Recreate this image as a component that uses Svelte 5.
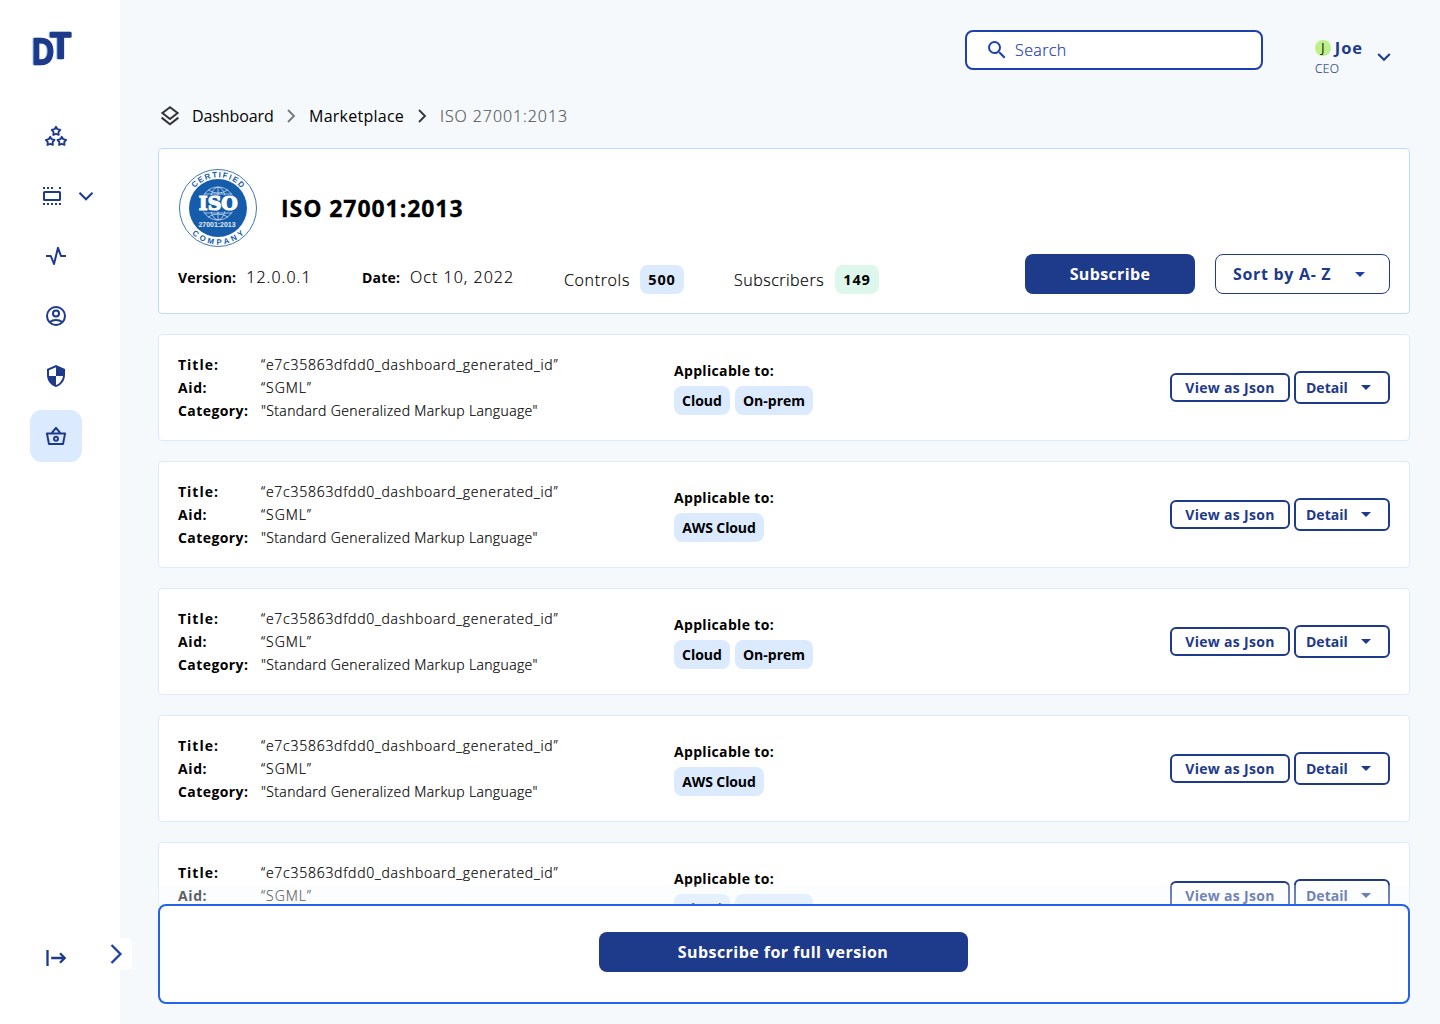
<script>
  const controls = [
    ['Cloud', 'On-prem'],
    ['AWS Cloud'],
    ['Cloud', 'On-prem'],
    ['AWS Cloud'],
    ['Cloud', 'On-prem']
  ];
  const star = 'M0-4.3 1.4-1.9 4.3-1.2 2.4 1 2.7 3.8 0 2.8-2.7 3.8-2.4 1-4.3-1.2-1.4-1.9Z';
</script>

{#snippet caret()}
  <svg class="caret" width="10" height="5" viewBox="0 0 10 5"><path d="M0 0h10L5 5z" fill="currentColor" /></svg>
{/snippet}

{#snippet chevron()}
  <svg width="24" height="24" viewBox="0 0 24 24" fill="none" stroke="currentColor" stroke-width="1.8"><path d="M9 6l6 6-6 6" /></svg>
{/snippet}

<div class="app">
  <aside class="sidebar">
    <svg class="logo" width="44" height="40" viewBox="0 0 44 40">
      <text class="d" x="1.7" y="34.4" textLength="22.5" lengthAdjust="spacingAndGlyphs">D</text>
      <text x="20.4" y="28.4" textLength="20.4" lengthAdjust="spacingAndGlyphs">T</text>
    </svg>
    <nav>
      <a class="item" href="#favorites" aria-label="Favorites">
        <svg width="24" height="24" viewBox="0 0 24 24" fill="none" stroke="currentColor" stroke-width="1.9" stroke-linejoin="round">
          <path transform="translate(12 7.1)" d={star} />
          <path transform="translate(6.2 17.1)" d={star} />
          <path transform="translate(17.8 17.1)" d={star} />
        </svg>
      </a>
      <a class="item wide" href="#views" aria-label="Views">
        <svg width="24" height="24" viewBox="0 0 24 24" fill="none" stroke="currentColor" stroke-width="2">
          <rect x="4" y="8" width="16" height="8" rx=".6" />
          <path d="M3 4h10M19 4h2M3 20h18" stroke-dasharray="2 2" />
        </svg>
        <svg class="more" width="24" height="24" viewBox="0 0 24 24" fill="none" stroke="currentColor" stroke-width="2"><path d="M5.5 8.8 12 15.3l6.5-6.5" /></svg>
      </a>
      <a class="item" href="#activity" aria-label="Activity">
        <svg width="24" height="24" viewBox="0 0 24 24" fill="none" stroke="currentColor" stroke-width="2" stroke-linejoin="round"><path d="M2 12h4.8l3.2 8 4-16.2L17 12h5" /></svg>
      </a>
      <a class="item" href="#account" aria-label="Account">
        <svg width="24" height="24" viewBox="0 0 24 24" fill="none" stroke="currentColor" stroke-width="2"><circle cx="12" cy="12" r="9" /><circle cx="12" cy="9.6" r="3" /><path d="M5.7 18.2C9 15.3 15 15.3 18.3 18.2" /></svg>
      </a>
      <a class="item" href="#security" aria-label="Security">
        <svg width="24" height="24" viewBox="0 0 24 24" fill="currentColor"><path d="M12 1 3 5v6c0 5.55 3.84 10.74 9 12 5.16-1.26 9-6.45 9-12V5l-9-4zm0 11h7c-.53 4.12-3.28 7.79-7 8.94V12H5V6.3l7-3.11V12z" /></svg>
      </a>
      <a class="item active" href="#marketplace" aria-label="Marketplace">
        <svg width="24" height="24" viewBox="0 0 24 24" fill="none" stroke="currentColor" stroke-width="2" stroke-linejoin="round"><path d="M2.9 9.4h18.2L19 20H5L2.9 9.4zM7.8 9 12 3.9 16.2 9" /><circle cx="12" cy="14.8" r="2" /></svg>
      </a>
    </nav>
    <svg class="exit" width="24" height="24" viewBox="0 0 24 24" fill="none" stroke="currentColor" stroke-width="2.3"><path d="M3.5 4v16M7.2 12H21M16 7.3l4.7 4.7-4.7 4.7" /></svg>
    <button class="expand" aria-label="Expand">
      <svg width="16" height="24" viewBox="0 0 16 24" fill="none" stroke="currentColor" stroke-width="2.4"><path d="M3.5 3 12.4 12l-8.9 9" /></svg>
    </button>
  </aside>

  <main>
    <header class="topbar">
      <label class="search">
        <svg width="24" height="24" viewBox="0 0 24 24" fill="currentColor"><path d="M15.5 14h-.79l-.28-.27A6.47 6.47 0 0 0 16 9.5 6.5 6.5 0 1 0 9.5 16c1.61 0 3.09-.59 4.23-1.57l.27.28v.79l5 4.99L20.49 19l-4.99-5zm-6 0C7.01 14 5 11.99 5 9.5S7.01 5 9.5 5 14 7.01 14 9.5 11.99 14 9.5 14z" /></svg>
        <span>Search</span>
      </label>
      <div class="user">
        <div class="who">
          <div class="name"><i>J</i><b>Joe</b></div>
          <div class="role">CEO</div>
        </div>
        <svg width="14" height="10" viewBox="0 0 14 10" fill="none" stroke="currentColor" stroke-width="2"><path d="M1.2 2 7 7.8 12.8 2" /></svg>
      </div>
    </header>

    <div class="crumbs">
      <svg width="24" height="24" viewBox="0 0 24 24" fill="none" stroke="#333" stroke-width="2"><path d="M12 3.2 19.6 9 12 15 4.4 9zM3.6 13.6 12 20.2l8.4-6.6" /></svg>
      <span class="c1">Dashboard</span>
      <span class="sep light">{@render chevron()}</span>
      <span class="c2">Marketplace</span>
      <span class="sep">{@render chevron()}</span>
      <span class="c3">ISO 27001:2013</span>
    </div>

    <section class="card summary">
      <div class="identity">
        <svg class="badge" width="80" height="80" viewBox="-40 -40 80 80">
          <defs>
            <path id="arc-top" d="M-30.6 0A30.6 30.6 0 0 1 30.6 0" />
            <path id="arc-bottom" d="M-36.6 0A36.6 36.6 0 0 0 36.6 0" />
          </defs>
          <circle r="38.5" fill="#fff" stroke="#3f78b8" stroke-width="1" />
          <circle r="29" fill="#155cab" />
          <g fill="none" stroke="#c9dcf0" stroke-width=".8">
            <circle r="16.5" cy="-4.5" />
            <ellipse rx="8" ry="16.5" cy="-4.5" />
            <path d="M0-21V12M-13.5-14h27M-13.5 5h27M-10-18Q0-12 10-18M-10 9Q0 3 10 9" />
          </g>
          <path d="M-22-12.6h44V3.6h-44z" fill="#155cab" />
          <text class="iso" x="-19.2" y="2.2" textLength="39" lengthAdjust="spacingAndGlyphs">ISO</text>
          <text class="num" x="-19.5" y="18.8" textLength="37" lengthAdjust="spacingAndGlyphs">27001:2013</text>
          <text class="ring"><textPath href="#arc-top" startOffset="50%" textLength="53">CERTIFIED</textPath></text>
          <text class="ring"><textPath href="#arc-bottom" startOffset="50%" textLength="58">COMPANY</textPath></text>
        </svg>
        <h1>ISO 27001:2013</h1>
      </div>
      <div class="facts">
        <div class="fact version"><b>Version:</b><span>12.0.0.1</span></div>
        <div class="fact date"><b>Date:</b><span>Oct 10, 2022</span></div>
        <div class="fact count controls"><span>Controls</span><em class="pill">500</em></div>
        <div class="fact count subscribers"><span>Subscribers</span><em class="pill green">149</em></div>
        <button class="primary subscribe">Subscribe</button>
        <button class="sort"><span>Sort by A- Z</span>{@render caret()}</button>
      </div>
    </section>

    {#each controls as tags}
      <section class="card control">
        <dl>
          <dt class="k1">Title:</dt><dd class="v1">“e7c35863dfdd0_dashboard_generated_id”</dd>
          <dt class="k2">Aid:</dt><dd class="v2">“SGML”</dd>
          <dt class="k3">Category:</dt><dd class="v3">"Standard Generalized Markup Language"</dd>
        </dl>
        <div class="applies">
          <b>Applicable to:</b>
          <div class="tags">
            {#each tags as tag}<em class="pill" class:aws={tag === 'AWS Cloud'}>{tag}</em>{/each}
          </div>
        </div>
        <div class="actions">
          <button class="json">View as Json</button>
          <button class="detail"><span>Detail</span>{@render caret()}</button>
        </div>
      </section>
    {/each}

    <div class="paywall">
      <div class="offer"><button class="primary full">Subscribe for full version</button></div>
    </div>
  </main>
</div>

<style>
  :global(body) { margin: 0; }
  * { box-sizing: border-box; }
  .app {
    position: relative; display: flex; height: 1024px; overflow: hidden; background: #f5f9fc;
    font-family: "Open Sans", "Noto Sans", sans-serif; font-size: 14px; color: #000;
  }
  svg { display: block; flex: none; }
  button { font: inherit; font-weight: 700; color: #1e3a8a; background: #fff; padding: 0; margin: 0; white-space: nowrap; }
  .sidebar { position: relative; flex: none; width: 120px; background: #fff; padding: 30px 0 0 30px; color: #1e3a8a; }
  .logo { overflow: visible; filter: drop-shadow(-1px .8px .4px #93c5fd); }
  .logo text { font: 600 34.5px "Open Sans", sans-serif; fill: #1e3a8a; stroke: #1e3a8a; stroke-width: 2.5; stroke-linejoin: round; }
  nav { display: flex; flex-direction: column; gap: 8px; margin-top: 40px; }
  .item { display: flex; align-items: center; justify-content: center; width: 52px; height: 52px; border-radius: 12px; color: inherit; }
  .item.wide { width: 90px; justify-content: flex-start; padding-left: 10px; gap: 10px; }
  .item.active { background: #dbeafe; }
  .exit { position: absolute; left: 44px; top: 946px; }
  .expand { position: absolute; left: 108px; top: 938px; width: 24px; height: 32px; border: 0; border-radius: 6px; color: #1e40af; }

  main { flex: 1; padding: 30px 30px 0 38px; }
  .topbar { display: flex; justify-content: flex-end; height: 40px; color: #1e3a8a; }
  .search { display: flex; align-items: center; gap: 6px; width: 298px; height: 40px; padding-left: 18px; border: 2px solid #1e40af; border-radius: 8px; background: #fff; color: #1e40af; font-size: 16px; }
  .search span { font-weight: 300; letter-spacing: .4px; -webkit-text-stroke: .2px; }
  .user { display: flex; align-items: center; gap: 14px; width: 95px; margin-left: 52px; height: 54px; }
  .who { width: 48px; }
  .name { display: flex; align-items: center; gap: 4px; height: 22px; font-size: 16.5px; margin-top: 1px; letter-spacing: .9px; }
  .name i { width: 16px; height: 16px; border-radius: 50%; background: #bef08a; font: 400 12px/16px "Open Sans", sans-serif; letter-spacing: 0; color: #000; text-align: center; }
  .role { font-size: 12px; font-weight: 300; line-height: 20px; letter-spacing: .3px; -webkit-text-stroke: .15px; position: relative; top: .5px; }

  .crumbs { display: flex; align-items: center; height: 24px; margin: 34px 0 20px; font-size: 16px; }
  .crumbs .c1 { width: 81px; margin-left: 10px; letter-spacing: -.1px; }
  .crumbs .c2 { width: 95px; letter-spacing: .25px; }
  .crumbs .c3 { color: #555; font-weight: 300; letter-spacing: .92px; -webkit-text-stroke: .2px; }
  .crumbs span { white-space: nowrap; }
  .sep { margin: 0 6px; color: #333; }
  .sep.light { color: #777; }

  .card { background: #fff; border: 1px solid #dbeafe; border-radius: 4px; margin-bottom: 20px; }
  .summary { height: 166px; border-color: #bfdbfe; padding: 19px 19px 0; }
  .identity { display: flex; align-items: center; height: 80px; gap: 23px; }
  h1 { margin: 0; font-size: 23px; letter-spacing: .93px; -webkit-text-stroke: .3px; }
  .ring { font: 700 7.9px "Liberation Sans", sans-serif; fill: #155cab; text-anchor: middle; }
  .iso { font: 700 19px "DejaVu Serif", serif; fill: #fff; stroke: #fff; stroke-width: 1.2; }
  .num { font: 700 7.6px "Liberation Sans", sans-serif; fill: #e6eef8; }
  .facts { display: flex; height: 40px; margin-top: 6px; align-items: flex-start; }
  .fact { display: flex; align-items: center; height: 46px; gap: 10px; font-size: 16px; font-weight: 300; white-space: nowrap; }
  .fact span { -webkit-text-stroke: .2px; }
  .fact b { font-size: 14px; font-weight: 700; letter-spacing: .18px; }
  .version { width: 184px; }
  .date { width: 202px; }
  .version span, .date span { letter-spacing: 1.03px; }
  .controls { width: 170px; }
  .count { height: 51px; justify-content: flex-start; }
  .controls span { width: 66px; letter-spacing: .65px; }
  .subscribers span { width: 91px; letter-spacing: .5px; }
  .pill { display: flex; align-items: center; justify-content: center; height: 29px; padding: 0 8px; border-radius: 8px; background: #dbeafe; font-style: normal; font-weight: 700; font-size: 14px; white-space: nowrap; }
  .pill.aws { width: 90px; letter-spacing: -.12px; }
  .fact .pill { width: 44px; padding: 0; font-size: 14.5px; letter-spacing: .9px; }
  .pill.green { background: #def7ec; }
  .primary { height: 40px; border: 0; border-radius: 8px; background: #1e3a8a; color: #fff; font-size: 16px; letter-spacing: .36px; }
  .subscribe { width: 170px; margin-left: auto; }
  .sort { display: flex; align-items: center; width: 175px; height: 40px; margin-left: 20px; padding-left: 17px; border: 1px solid #1e3a8a; border-radius: 8px; font-size: 16px; letter-spacing: .68px; }
  .sort span { width: 122px; text-align: left; }
  .sort .caret { color: #1e40af; }

  .control { display: flex; align-items: center; height: 107px; padding: 0 19px; }
  dl { display: grid; grid-template-columns: 83px 1fr; grid-auto-rows: 23px; width: 496px; margin: 0; line-height: 23px; white-space: nowrap; }
  dt { font-weight: 700; }
  dd { margin: 0; font-weight: 300; -webkit-text-stroke: .2px; }
  .k1 { letter-spacing: .98px; }
  .k2 { letter-spacing: .6px; }
  .k3 { letter-spacing: .42px; }
  .v1 { letter-spacing: .735px; }
  .v2 { letter-spacing: .92px; }
  .v3 { letter-spacing: .37px; }
  .applies b { display: block; line-height: 22px; margin-bottom: 4px; letter-spacing: .33px; }
  .tags { display: flex; gap: 5px; }
  .actions { display: flex; align-items: center; gap: 4px; margin-left: auto; }
  .json { width: 120px; height: 29px; border: 2px solid #1e3a8a; border-radius: 6px; letter-spacing: .3px; }
  .detail { display: flex; align-items: center; width: 96px; height: 33px; padding-left: 10px; border: 2px solid #1e3a8a; border-radius: 6px; }
  .detail span { width: 55px; text-align: left; }

  .paywall { position: absolute; left: 158px; right: 30px; top: 885px; bottom: 0; padding-top: 19px; background: linear-gradient(to bottom, rgba(245, 249, 252, .32), rgba(245, 249, 252, .42) 20px, #f5f9fc 60px); }
  .offer { display: flex; justify-content: center; height: 100px; padding: 26px 2px 0 0; border: 2px solid #2563eb; border-radius: 8px; background: #fff; }
  .full { width: 369px; letter-spacing: .46px; }
</style>
